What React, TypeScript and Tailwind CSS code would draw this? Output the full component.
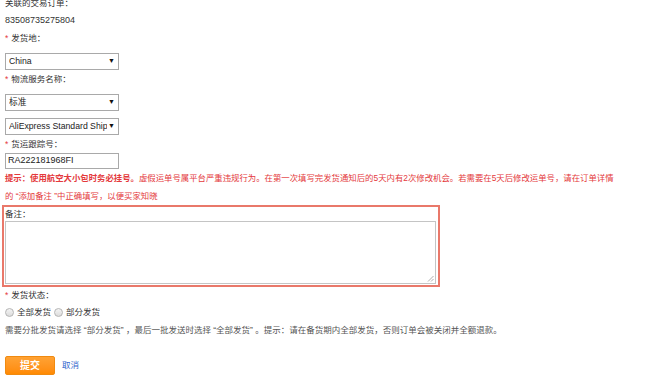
import React from "react";

const Star = () => <span className="text-[#e4393c] mr-[3px]">*</span>;

const Select = ({ value, className = "" }: { value: string; className?: string }) => (
  <div
    className={`w-[114px] h-[17px] border border-[#a9a9a9] bg-white flex items-center pl-[3px] pr-[3px] text-[8.7px] text-[#222] overflow-hidden ${className}`}
  >
    <span className="flex-1 min-w-0 whitespace-nowrap overflow-hidden">{value}</span>
    <span className="text-[7px] text-[#111] ml-[1px] shrink-0">▼</span>
  </div>
);

const Radio = () => (
  <span className="inline-block w-[9px] h-[9px] rounded-full border border-[#b5b5b5] bg-gradient-to-b from-[#f4f4f4] to-[#dcdcdc] mr-[3px] align-middle" />
);

export default function App() {
  return (
    <div
      className="w-[650px] h-[387px] bg-white overflow-hidden text-[8.5px] text-[#333] pl-[5px]"
      style={{ fontFamily: '"Liberation Sans", "Noto Sans CJK SC", sans-serif' }}
    >
      <div className="-mt-[6px] h-[18px] leading-[18px]">关联的交易订单：</div>
      <div className="h-[18px] leading-[18px] mt-[-1px] text-[9px] text-[#333]">83508735275804</div>
      <div className="h-[18px] leading-[18px]">
        <Star />发货地：
      </div>
      <Select value="China" className="mt-[6px]" />
      <div className="h-[18px] leading-[18px]">
        <Star />物流服务名称：
      </div>
      <Select value="标准" className="mt-[6px]" />
      <Select value="AliExpress Standard Shipping" className="mt-[7px]" />
      <div className="h-[18px] leading-[18px]">
        <Star />货运跟踪号：
      </div>
      <div className="w-[114px] h-[16px] border border-[#a9a9a9] flex items-center pl-[2px] text-[9px] text-[#222]">
        RA222181968FI
      </div>
      <div className="h-[18px] leading-[18px] text-[#e4393c] whitespace-nowrap text-[8.4px]">
        <span className="font-bold">提示：使用航空大小包时务必挂号。</span>
        虚假运单号属平台严重违规行为。在第一次填写完发货通知后的5天内有2次修改机会。若需要在5天后修改运单号，请在订单详情
      </div>
      <div className="h-[18px] leading-[18px] text-[#e4393c] text-[8.4px]">的 “添加备注 ”中正确填写，以便买家知晓</div>
      <div className="-ml-[3px] w-[438px] h-[82px] border-2 border-[#e9786a] pl-[1px] pr-[2px] flex flex-col">
        <div className="h-[14px] leading-[14px] text-[#333]">备注：</div>
        <div className="relative w-full h-[63px] border border-[#c4c4c4] bg-white">
          <svg className="absolute right-[1px] bottom-[1px]" width="7" height="7" viewBox="0 0 7 7">
            <line x1="6.5" y1="1" x2="1" y2="6.5" stroke="#999" strokeWidth="0.8" />
            <line x1="6.5" y1="4" x2="4" y2="6.5" stroke="#999" strokeWidth="0.8" />
          </svg>
        </div>
      </div>
      <div className="h-[14px] leading-[14px] mt-[1px]">
        <Star />发货状态：
      </div>
      <div className="h-[18px] leading-[18px] mt-[1px] flex items-center">
        <Radio />
        <span>全部发货</span>
        <span className="ml-[3px]" />
        <Radio />
        <span>部分发货</span>
      </div>
      <div className="h-[18px] leading-[18px] text-[#555] whitespace-nowrap text-[8.5px]">
        需要分批发货请选择 “部分发货” ，最后一批发送时选择 “全部发货” 。提示：请在备货期内全部发货，否则订单会被关闭并全额退款。
      </div>
      <div className="flex items-center mt-[17px]">
        <button className="w-[50px] h-[19px] rounded-[2px] bg-gradient-to-b from-[#ffa233] to-[#ff8a00] text-white text-[10px] font-bold leading-[17px] border border-[#f08a10]">
          提交
        </button>
        <span className="ml-[7px] text-[#3366cc] text-[8.5px]">取消</span>
      </div>
    </div>
  );
}
